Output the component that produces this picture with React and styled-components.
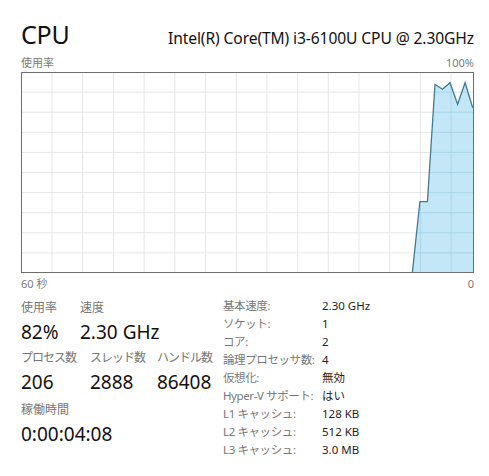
import React from "react";
import styled, { createGlobalStyle } from "styled-components";

const Global = createGlobalStyle`
  html, body { margin: 0; padding: 0; background: #ffffff; }
  body { font-family: "Noto Sans", "Noto Sans CJK JP", sans-serif; color: #1a1a1a; }
`;

const Page = styled.div`
  width: 489px;
  height: 476px;
  box-sizing: border-box;
  padding: 16px 16px 0 21px;
  background: #fff;
`;

const Panel = styled.div`
  width: 453px;
  display: flex;
  flex-direction: column;
`;

const Header = styled.div`
  display: flex;
  justify-content: space-between;
  align-items: baseline;
  height: 36px;
`;

const Title = styled.div`
  font-size: 25px;
  line-height: 36px;
  font-weight: 400;
  color: #111;
  letter-spacing: -0.2px;
`;

const Model = styled.div`
  font-size: 15.6px;
  line-height: 36px;
  color: #111;
  letter-spacing: -0.1px;
`;

const AxisRow = styled.div`
  display: flex;
  justify-content: space-between;
  align-items: center;
  height: ${(p) => p.$h}px;
  font-size: 11px;
  color: #7a7a7a;
`;

const Graph = styled.div`
  width: 453px;
  height: 201px;
  box-sizing: border-box;
  border: 1px solid #6e6e6e;
  overflow: hidden;
  line-height: 0;
`;

const Bottom = styled.div`
  display: flex;
  margin-top: 6px;
`;

const Left = styled.div`
  width: 202px;
  display: flex;
  flex-direction: column;
`;

const StatRow = styled.div`
  display: flex;
  margin-bottom: ${(p) => p.$mb || 0}px;
`;

const Stat = styled.div`
  width: ${(p) => p.$w}px;
  display: flex;
  flex-direction: column;
  white-space: nowrap;
`;

const StatLabel = styled.div`
  font-size: 12px;
  line-height: 18px;
  color: #757575;
  letter-spacing: ${(p) => (p.$kana ? "-1px" : "0")};
`;

const StatValue = styled.div`
  font-size: 19px;
  line-height: 30px;
  color: #111;
`;

const Table = styled.div`
  display: grid;
  grid-template-columns: 99px auto;
  grid-auto-rows: 18px;
  align-items: center;
  font-size: 11.5px;
  margin-top: -3px;
`;

const Key = styled.div`
  color: #777;
  white-space: nowrap;
  letter-spacing: -0.4px;
`;

const Val = styled.div`
  color: #1e1e1e;
  white-space: nowrap;
`;

const W = 451;
const H = 199;

function Chart() {
  const vlines = [];
  for (let k = 0; k < 14; k++) vlines.push(30 + 30.7 * k);
  const hlines = [];
  for (let k = 1; k < 10; k++) hlines.push(20.1 * k - 1);
  const pts = [
    [390.3, 200],
    [397.9, 128.7],
    [405.4, 128.7],
    [413, 11.3],
    [420.5, 16.3],
    [428, 9.7],
    [435.6, 31.3],
    [443.1, 9.7],
    [450.7, 34.7],
  ];
  const line = pts.map((p) => p.join(",")).join(" ");
  const area = `${line} ${W},34.7 ${W},${H + 2} 390.3,${H + 2}`;
  const grid = (color, key) => (
    <g key={key}>
      {vlines.map((x) => (
        <line key={"v" + x} x1={x} x2={x} y1={0} y2={H} stroke={color} strokeWidth="1" />
      ))}
      {hlines.map((y) => (
        <line key={"h" + y} x1={0} x2={W} y1={y} y2={y} stroke={color} strokeWidth="1" />
      ))}
    </g>
  );
  return (
    <svg width={W} height={H} viewBox={`0 0 ${W} ${H}`}>
      <defs>
        <clipPath id="areaClip">
          <polygon points={area} />
        </clipPath>
      </defs>
      {grid("#e6e6e6", "g1")}
      <polygon points={area} fill="#c3e7f7" />
      <g clipPath="url(#areaClip)">{grid("#a9d4e8", "g2")}</g>
      <polyline points={line} fill="none" stroke="#3d7c96" strokeWidth="1.3" />
    </svg>
  );
}

const specs = [
  ["基本速度:", "2.30 GHz"],
  ["ソケット:", "1"],
  ["コア:", "2"],
  ["論理プロセッサ数:", "4"],
  ["仮想化:", "無効"],
  ["Hyper-V サポート:", "はい"],
  ["L1 キャッシュ:", "128 KB"],
  ["L2 キャッシュ:", "512 KB"],
  ["L3 キャッシュ:", "3.0 MB"],
];

export default function App() {
  return (
    <Page>
      <Global />
      <Panel>
        <Header>
          <Title>CPU</Title>
          <Model>Intel(R) Core(TM) i3-6100U CPU @ 2.30GHz</Model>
        </Header>
        <AxisRow $h={20}>
          <span>使用率</span>
          <span>100%</span>
        </AxisRow>
        <Graph>
          <Chart />
        </Graph>
        <AxisRow $h={20}>
          <span>60 秒</span>
          <span>0</span>
        </AxisRow>
        <Bottom>
          <Left>
            <StatRow $mb={2}>
              <Stat $w={59}>
                <StatLabel>使用率</StatLabel>
                <StatValue>82%</StatValue>
              </Stat>
              <Stat $w={100}>
                <StatLabel>速度</StatLabel>
                <StatValue>2.30 GHz</StatValue>
              </Stat>
            </StatRow>
            <StatRow $mb={4}>
              <Stat $w={69}>
                <StatLabel $kana>プロセス数</StatLabel>
                <StatValue>206</StatValue>
              </Stat>
              <Stat $w={67}>
                <StatLabel $kana>スレッド数</StatLabel>
                <StatValue>2888</StatValue>
              </Stat>
              <Stat $w={66}>
                <StatLabel $kana>ハンドル数</StatLabel>
                <StatValue>86408</StatValue>
              </Stat>
            </StatRow>
            <StatRow>
              <Stat $w={150}>
                <StatLabel>稼働時間</StatLabel>
                <StatValue>0:00:04:08</StatValue>
              </Stat>
            </StatRow>
          </Left>
          <Table>
            {specs.map(([k, v]) => (
              <React.Fragment key={k}>
                <Key>{k}</Key>
                <Val>{v}</Val>
              </React.Fragment>
            ))}
          </Table>
        </Bottom>
      </Panel>
    </Page>
  );
}
